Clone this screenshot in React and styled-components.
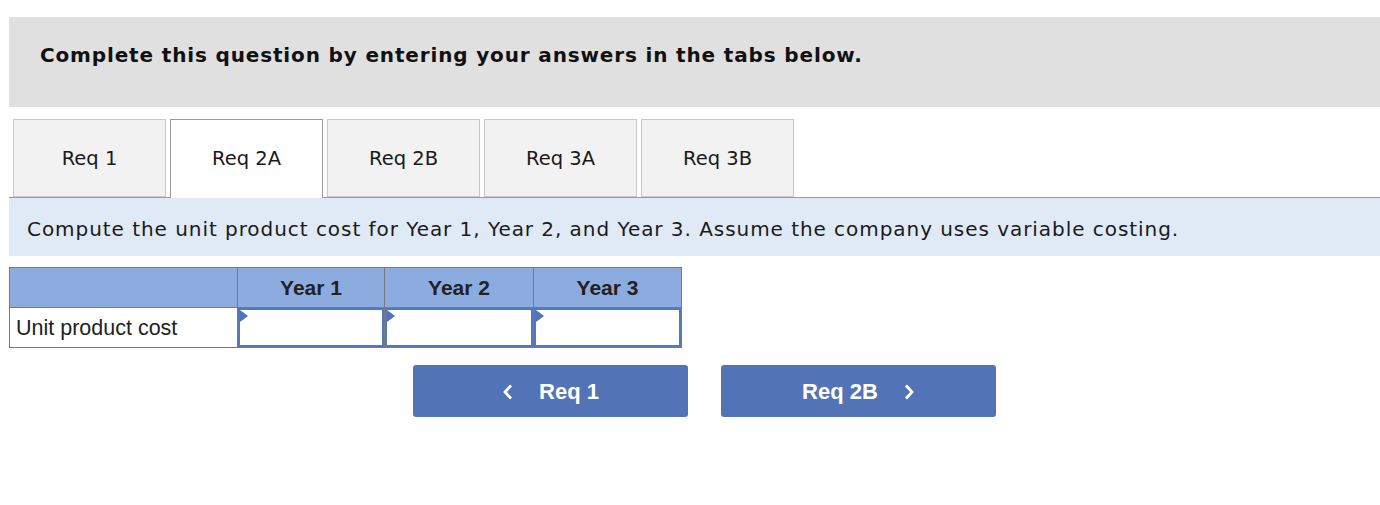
import React, { useState } from "react";
import styled, { createGlobalStyle } from "styled-components";

const GlobalStyle = createGlobalStyle`
  html, body {
    margin: 0;
    padding: 0;
    background: #ffffff;
  }
  body {
    font-family: "DejaVu Sans", Verdana, sans-serif;
    color: #1a1a1a;
  }
`;

const Page = styled.div`
  padding: 17px 0 0 9px;
  width: 1371px;
`;

const Banner = styled.div`
  height: 90px;
  background: #e0e0e0;
  padding: 26px 0 0 31px;
  box-sizing: border-box;
  font-family: "DejaVu Sans", Verdana, sans-serif;
  font-weight: bold;
  font-size: 20px;
  line-height: 24px;
  letter-spacing: 0.85px;
  color: #111;
`;

const TabRow = styled.div`
  display: flex;
  gap: 4px;
  margin-top: 12px;
  padding-left: 4px;
  border-bottom: 1px solid #9a9a9a;
  height: 78px;
`;

const Tab = styled.button`
  width: 153px;
  height: ${(p) => (p.active ? "79px" : "78px")};
  box-sizing: border-box;
  border: 1px solid ${(p) => (p.active ? "#9a9a9a" : "#c8c8c8")};
  border-bottom: ${(p) => (p.active ? "none" : "1px solid #c8c8c8")};
  background: ${(p) => (p.active ? "#ffffff" : "#f2f2f2")};
  font-family: "DejaVu Sans", Verdana, sans-serif;
  font-size: 19.5px;
  line-height: 24px;
  color: #1a1a1a;
  display: flex;
  align-items: flex-start;
  justify-content: center;
  padding: 27px 0 0;
  cursor: pointer;
  position: relative;
  z-index: ${(p) => (p.active ? 1 : 0)};
`;

const Instruction = styled.div`
  height: 58px;
  background: #dfeaf6;
  display: flex;
  align-items: center;
  padding: 4px 0 0 18px;
  box-sizing: border-box;
  font-family: "DejaVu Sans", Verdana, sans-serif;
  font-size: 20px;
  letter-spacing: 0.95px;
  color: #1a1a1a;
`;

const Table = styled.table`
  margin-top: 11px;
  border-collapse: collapse;
  font-family: "Liberation Sans", Arial, sans-serif;
`;

const HeadCell = styled.th`
  background: #8cacdf;
  border: 1px solid #7a7a7a;
  height: 39px;
  width: ${(p) => p.w}px;
  padding: 0;
  font-size: 21px;
  font-weight: bold;
  color: #222;
  text-align: center;
  vertical-align: middle;
`;

const LabelCell = styled.td`
  border: 1px solid #7a7a7a;
  height: 39px;
  padding: 2px 0 0 6px;
  box-sizing: border-box;
  font-size: 21.5px;
  color: #222;
  vertical-align: middle;
`;

const InputCell = styled.td`
  border: 1px solid #7a7a7a;
  padding: 0;
  height: 39px;
  position: relative;
`;

const Field = styled.input`
  display: block;
  width: 100%;
  height: 39px;
  box-sizing: border-box;
  border: 2px solid #5577bb;
  outline: none;
  background: #ffffff;
  font-family: "Liberation Sans", Arial, sans-serif;
  font-size: 20px;
  padding: 0 6px;
  text-align: right;
`;

const Marker = styled.span`
  position: absolute;
  top: 2px;
  left: 2px;
  width: 0;
  height: 0;
  border-top: 6px solid transparent;
  border-bottom: 6px solid transparent;
  border-left: 8px solid #4f72b8;
  pointer-events: none;
`;

const NavRow = styled.div`
  display: flex;
  gap: 33px;
  margin-top: 17px;
  padding-left: 404px;
`;

const NavButton = styled.button`
  width: 275px;
  height: 52px;
  border: none;
  border-radius: 3px;
  background: #5274b6;
  color: #ffffff;
  font-family: "Liberation Sans", Arial, sans-serif;
  font-weight: bold;
  font-size: 22px;
  display: flex;
  align-items: center;
  justify-content: center;
  gap: 26px;
  padding: 2px 0 0;
  cursor: pointer;
`;

const Chevron = ({ dir }) => (
  <svg width="11" height="16" viewBox="0 0 11 16">
    <polyline
      points={dir === "left" ? "9,1.5 3,8 9,14.5" : "2,1.5 8,8 2,14.5"}
      fill="none"
      stroke="#ffffff"
      strokeWidth="2.8"
      strokeLinejoin="miter"
    />
  </svg>
);

const tabs = ["Req 1", "Req 2A", "Req 2B", "Req 3A", "Req 3B"];
const years = ["Year 1", "Year 2", "Year 3"];
const widths = [146, 148, 147];

export default function App() {
  const [active, setActive] = useState("Req 2A");
  const [values, setValues] = useState(["", "", ""]);

  return (
    <>
      <GlobalStyle />
      <Page>
        <Banner>Complete this question by entering your answers in the tabs below.</Banner>
        <TabRow>
          {tabs.map((t) => (
            <Tab key={t} active={active === t} onClick={() => setActive(t)}>
              {t}
            </Tab>
          ))}
        </TabRow>
        <Instruction>
          Compute the unit product cost for Year 1, Year 2, and Year 3. Assume the company uses variable costing.
        </Instruction>
        <Table>
          <thead>
            <tr>
              <HeadCell w={227}></HeadCell>
              {years.map((y, i) => (
                <HeadCell key={y} w={widths[i]}>{y}</HeadCell>
              ))}
            </tr>
          </thead>
          <tbody>
            <tr>
              <LabelCell>Unit product cost</LabelCell>
              {values.map((v, i) => (
                <InputCell key={i}>
                  <Field
                    value={v}
                    onChange={(e) => {
                      const next = [...values];
                      next[i] = e.target.value;
                      setValues(next);
                    }}
                  />
                  <Marker />
                </InputCell>
              ))}
            </tr>
          </tbody>
        </Table>
        <NavRow>
          <NavButton>
            <Chevron dir="left" />
            <span>Req 1</span>
          </NavButton>
          <NavButton>
            <span>Req 2B</span>
            <Chevron dir="right" />
          </NavButton>
        </NavRow>
      </Page>
    </>
  );
}
